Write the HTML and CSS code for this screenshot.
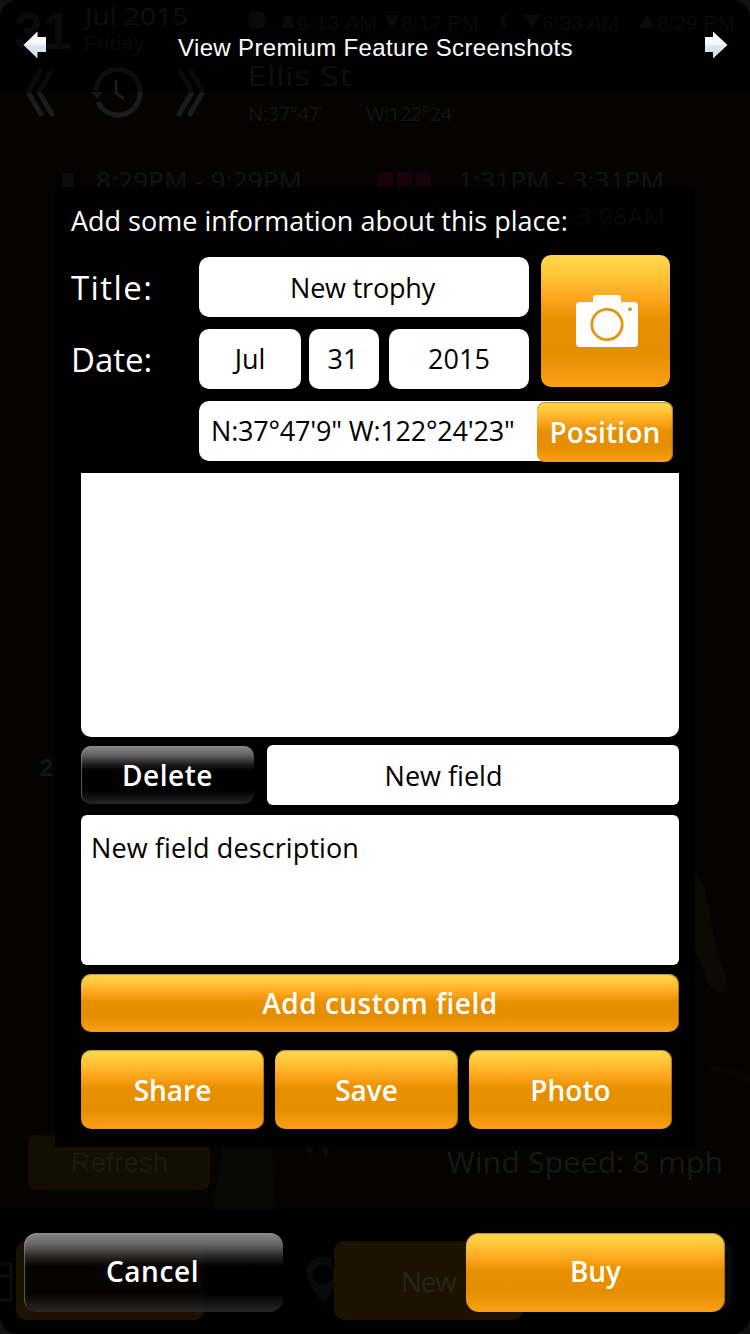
FILE: index.html
```html
<!DOCTYPE html>
<html lang="en">
<head>
    <meta charset="utf-8">
    <title>View Premium Feature Screenshots</title>
    <link rel="stylesheet" href="styles.css">
</head>
<body>
    <div class="screen">
        <!-- Dimmed main screen behind the dialog -->
        <svg class="backdrop" width="750" height="1334" viewBox="0 0 750 1334" aria-hidden="true">
            <rect width="750" height="1334" fill="#111"/>
            <rect width="750" height="1334" rx="18" fill="#000"/>
            <rect y="92" width="750" height="1118" fill="#040301"/>
            <g fill="#141414">
                <text class="heavy" x="14" y="49" font-size="52" textLength="58" fill="#0b0b0b">31</text>
                <text x="85" y="25" font-size="23" textLength="103" lengthAdjust="spacingAndGlyphs" fill="#0f0f0f">Jul 2015</text>
                <text class="plain" x="84" y="50" font-size="20" textLength="60" fill="#0a0a0a">Friday</text>
                <g fill="#0a0a0a">
                    <circle cx="257" cy="20" r="9"/>
                    <path d="M280 28l8-14 8 14zM384 15h16l-8 14zM524 15h16l-8 14zM639 28l8-14 8 14z"/>
                    <path d="M509 13a8 8 0 1 0 0 16a10 10 0 0 1 0-16z"/>
                    <text class="plain" x="297" y="30" font-size="21" textLength="80">6:13 AM</text>
                    <text class="plain" x="401" y="30" font-size="21" textLength="78">8:17 PM</text>
                    <text class="plain" x="542" y="30" font-size="21" textLength="77">6:33 AM</text>
                    <text class="plain" x="657" y="30" font-size="21" textLength="78">8:29 PM</text>
                </g>
                <text x="247" y="86" font-size="28" textLength="105" lengthAdjust="spacingAndGlyphs" fill="#120c0c">Ellis St</text>
                <text x="248" y="121" font-size="20" textLength="76">N:37°47'</text>
                <text x="366" y="121" font-size="20" textLength="90">W:122°24'</text>
                <text x="96" y="190" font-size="26" textLength="206">8:29PM - 9:29PM</text>
                <text x="458" y="190" font-size="26" textLength="206">1:31PM - 3:31PM</text>
                <rect x="62" y="173" width="12" height="14" fill="#0b0c0c"/>
                <path d="M378 172h15v15h-15zM397 172h15v15h-15zM416 172h15v15h-15z" fill="#19030a"/>
                <!-- day switcher -->
                <g fill="none" stroke="#1b1b1b" stroke-width="5">
                    <path d="M28 92l14 24M39 92l14 24M203 92l-14 24M192 92l-14 24"/>
                    <path d="M28 92l13-23M39 92l13-23M203 92l-13-23M192 92l-13-23" stroke="#0a0a0a"/>
                    <path d="M98 102a22 22 0 0 0 42-10"/>
                    <path d="M140 92a22 22 0 0 0-44-1" stroke="#0d0d0d"/>
                    <path d="M116 80v13l8 6" stroke-width="3"/>
                </g>
                <path d="M91 92h12l-6 7z" fill="#151515"/>
                <text x="578" y="225" font-size="24" textLength="87" fill="#3a3a3a">3:08AM</text>
                <text class="heavy" x="40" y="776" font-size="23">2<tspan fill="#0a0a0a">70</tspan></text>
                <text class="heavy" x="678" y="775" font-size="23" fill="#090909">0</text>
                <path d="M695 873l10 16 8 42 13 48q3 12-5 14-8 1-12-9l-14-34z" fill="#0c0a05"/>
                <path d="M709 1067q24-7 41 11v12q-16-20-41-17z" fill="#080602"/>
                <rect x="28" y="1135" width="182" height="55" rx="8" fill="#140d01"/>
                <text class="plain" x="71" y="1172" font-size="27" textLength="97" fill="#1d1812">Refresh</text>
                <path d="M222 1147h50l4 62h-64z" fill="#080806"/>
                <path d="M306 1147h8l-3 16zM321 1147h8l-3 14z" fill="#0a0906"/>
                <text x="447" y="1173" font-size="30" textLength="276" fill="#171716">Wind Speed: 8 mph</text>
                <!-- bottom toolbar -->
                <rect y="1210" width="750" height="106" fill="#000"/>
                <path d="M0 1264h11v12H0m11-4v28H0" fill="none" stroke="#0c0c0c" stroke-width="3"/>
                <rect x="16" y="1241" width="188" height="79" rx="10" fill="#1b1201"/>
                <rect x="334" y="1241" width="189" height="79" rx="10" fill="#1b1201"/>
                <path d="M331 1258a17 17 0 0 0-24 20q5 12 16 25q8-9 12-19" fill="#0a0a0c"/>
                <circle cx="323" cy="1275" r="10" fill="#000"/>
                <text x="401" y="1292" font-size="28" textLength="56" fill="#29231c">New</text>
                <rect x="700" y="1242" width="32" height="66" rx="9" fill="#0a0a0a"/>
            </g>
        </svg>

        <div class="topbar">
            <svg class="arrow" width="24" height="28" viewBox="0 0 24 28">
                <defs>
                    <linearGradient id="silver" x1="0" y1="0" x2="0" y2="1">
                        <stop offset="0" stop-color="#fff"/>
                        <stop offset="0.45" stop-color="#f6f8fc"/>
                        <stop offset="0.55" stop-color="#dce3f2"/>
                        <stop offset="1" stop-color="#d3deef"/>
                    </linearGradient>
                </defs>
                <path d="M0.5 14L14.5 0.5V6H23V21H14.5V27.5z" fill="url(#silver)"/>
            </svg>
            <div class="heading">View Premium Feature Screenshots</div>
            <svg class="arrow" width="24" height="28" viewBox="0 0 24 28">
                <path d="M23.5 14L9 0.5V6H1V21H9V27.5z" fill="url(#silver)"/>
            </svg>
        </div>

        <div class="dialog">
            <div class="intro">Add some information about this place:</div>

            <div class="place">
                <div class="label title-label">Title:</div>
                <div class="field title">New trophy</div>
                <button class="btn gold camera" aria-label="Take photo">
                    <svg width="62" height="54" viewBox="0 0 62 54">
                        <path d="M4 8H17V4Q17 1 20 1H42Q45 1 45 4V8H58Q62 8 62 12V49Q62 53 58 53H4Q0 53 0 49V12Q0 8 4 8z" fill="#fff"/>
                        <circle cx="31" cy="30.500" r="15.200" fill="none" stroke="#e59410" stroke-width="2.800"/>
                        <circle cx="54" cy="15.200" r="2" fill="#d99a1c"/>
                    </svg>
                </button>
                <div class="label date-label">Date:</div>
                <div class="date">
                    <div class="field">Jul</div>
                    <div class="field day">31</div>
                    <div class="field">2015</div>
                </div>
                <div class="coords">
                    <div class="coords-text">N:37°47'9" W:122°24'23"</div>
                    <button class="btn gold position">Position</button>
                </div>
            </div>

            <div class="details">
                <div class="notes"></div>
                <div class="custom">
                    <button class="btn dark delete">Delete</button>
                    <div class="field name">New field</div>
                </div>
                <div class="field description">New field description</div>
                <button class="btn gold add">Add custom field</button>
                <div class="actions">
                    <button class="btn gold">Share</button>
                    <button class="btn gold">Save</button>
                    <button class="btn gold">Photo</button>
                </div>
            </div>
        </div>

        <div class="footer">
            <button class="btn dark">Cancel</button>
            <button class="btn gold">Buy</button>
        </div>
    </div>
</body>
</html>
```

FILE: styles.css
```css
* {
    box-sizing: border-box;
}

body {
    margin: 0;
    background: #000;
    color: #fff;
    font-family: "Trebuchet MS", "Open Sans", sans-serif;
    font-size: 27px;
}

.screen {
    position: relative;
    display: flex;
    flex-direction: column;
    width: 750px;
    height: 1334px;
    overflow: hidden;
}

.backdrop {
    position: absolute;
    top: 0;
    left: 0;
    z-index: -1;
}

.backdrop .plain {
    font-family: "Liberation Sans", sans-serif;
}

.backdrop .heavy {
    font-family: "Liberation Sans", sans-serif;
    font-weight: bold;
}

.topbar {
    display: flex;
    justify-content: space-between;
    height: 187px;
    padding: 31px 22px 0 23px;
}

.heading {
    font-family: "Liberation Sans", sans-serif;
    font-size: 24px;
    line-height: 34px;
    letter-spacing: 0.35px;
}

/* Dialog */
.dialog {
    width: 640px;
    height: 960px;
    margin-left: 55px;
    padding: 13px 16px 0;
    background: rgba(0, 0, 0, 0.85);
}

.intro {
    height: 55px;
    line-height: 42px;
    white-space: nowrap;
}

.place {
    display: grid;
    grid-template-columns: 128px 330px 144px;
    grid-template-rows: 62px 72px 84px;
    align-items: start;
}

.label {
    font-size: 33px;
    line-height: 66px;
}

.title-label {
    letter-spacing: 1.4px;
}

.date-label {
    margin-top: 10px;
}

.field {
    height: 60px;
    border-radius: 10px;
    background: #fff;
    color: #000;
    line-height: 60px;
    text-align: center;
    white-space: nowrap;
}

.title {
    margin-top: 2px;
    padding-right: 3px;
    line-height: 62px;
    letter-spacing: -0.2px;
}

.camera {
    grid-column: 3;
    grid-row: 1 / 3;
    width: 129px;
    height: 132px;
    margin-left: 12px;
    border-radius: 13px;
}

.date {
    display: grid;
    grid-template-columns: 102px 70px 140px;
    column-gap: 9px;
    margin-top: 12px;
}

.day {
    margin: 0 1px 0 -1px;
    padding-right: 2px;
}

.coords {
    grid-column: 2 / 4;
    display: flex;
    justify-content: space-between;
    width: 474px;
    height: 60px;
    margin-top: 12px;
    padding-left: 12px;
    border-radius: 10px;
    background: #fff;
    color: #000;
    line-height: 59px;
    white-space: nowrap;
}

.coords-text {
    letter-spacing: -0.2px;
}

.details {
    display: flex;
    flex-direction: column;
    width: 598px;
    margin-left: 10px;
}

.notes {
    height: 264px;
    border-radius: 0 0 10px 10px;
    background: #fff;
}

.custom {
    display: flex;
    gap: 13px;
    margin: 8px 0 10px;
}

.name {
    flex: 1;
    padding-right: 59px;
    border-radius: 6px;
    line-height: 62px;
}

.description {
    height: 150px;
    padding: 3px 10px;
    border-radius: 6px;
    text-align: left;
    letter-spacing: 0.1px;
}

.actions {
    display: grid;
    grid-template-columns: 183px 183px 203px;
    column-gap: 11px;
    margin-top: 18px;
}

.actions .btn,
.footer .btn {
    height: 79px;
}

/* Glossy buttons */
.btn {
    display: flex;
    justify-content: center;
    align-items: center;
    padding: 0;
    border: none;
    border-radius: 10px;
    color: #fff;
    font-family: inherit;
    font-size: 28px;
    font-weight: 600;
    white-space: nowrap;
}

.gold {
    background: linear-gradient(#ffd84f 0%, #ffc83c 13%, #fca51c 34%, #e89000 48%, #e58e00 75%, #f79c12 94%, #fba114 100%);
    box-shadow: inset 0 1px 1px rgba(150, 125, 80, 0.7), inset -1px 0 1px rgba(120, 85, 20, 0.6);
}

.dark {
    background: linear-gradient(rgba(138, 138, 138, 0.98) 0%, rgba(105, 105, 105, 0.95) 15%, rgba(35, 35, 35, 0.85) 32%, rgba(0, 0, 0, 0.8) 42%, rgba(0, 0, 0, 0.8) 76%, rgba(42, 42, 42, 0.9) 100%);
    box-shadow: inset 1px 1px 1px rgba(150, 150, 150, 0.6);
}

.camera {
    padding-left: 3px;
    box-shadow: none;
}

.position {
    width: 136px;
    height: 60px;
    margin-top: 1px;
    border-radius: 8px;
    letter-spacing: 0.2px;
}

.delete {
    width: 173px;
    height: 58px;
    margin-top: 1px;
    letter-spacing: 0.5px;
}

.add {
    height: 58px;
    margin-top: 9px;
    letter-spacing: 0.5px;
}

.footer {
    display: flex;
    justify-content: space-between;
    padding: 86px 25px 0 24px;
}

.footer .btn {
    width: 259px;
    padding-bottom: 3px;
    border-radius: 13px;
}

.footer .dark {
    padding-right: 2px;
    letter-spacing: 0.6px;
}
```
